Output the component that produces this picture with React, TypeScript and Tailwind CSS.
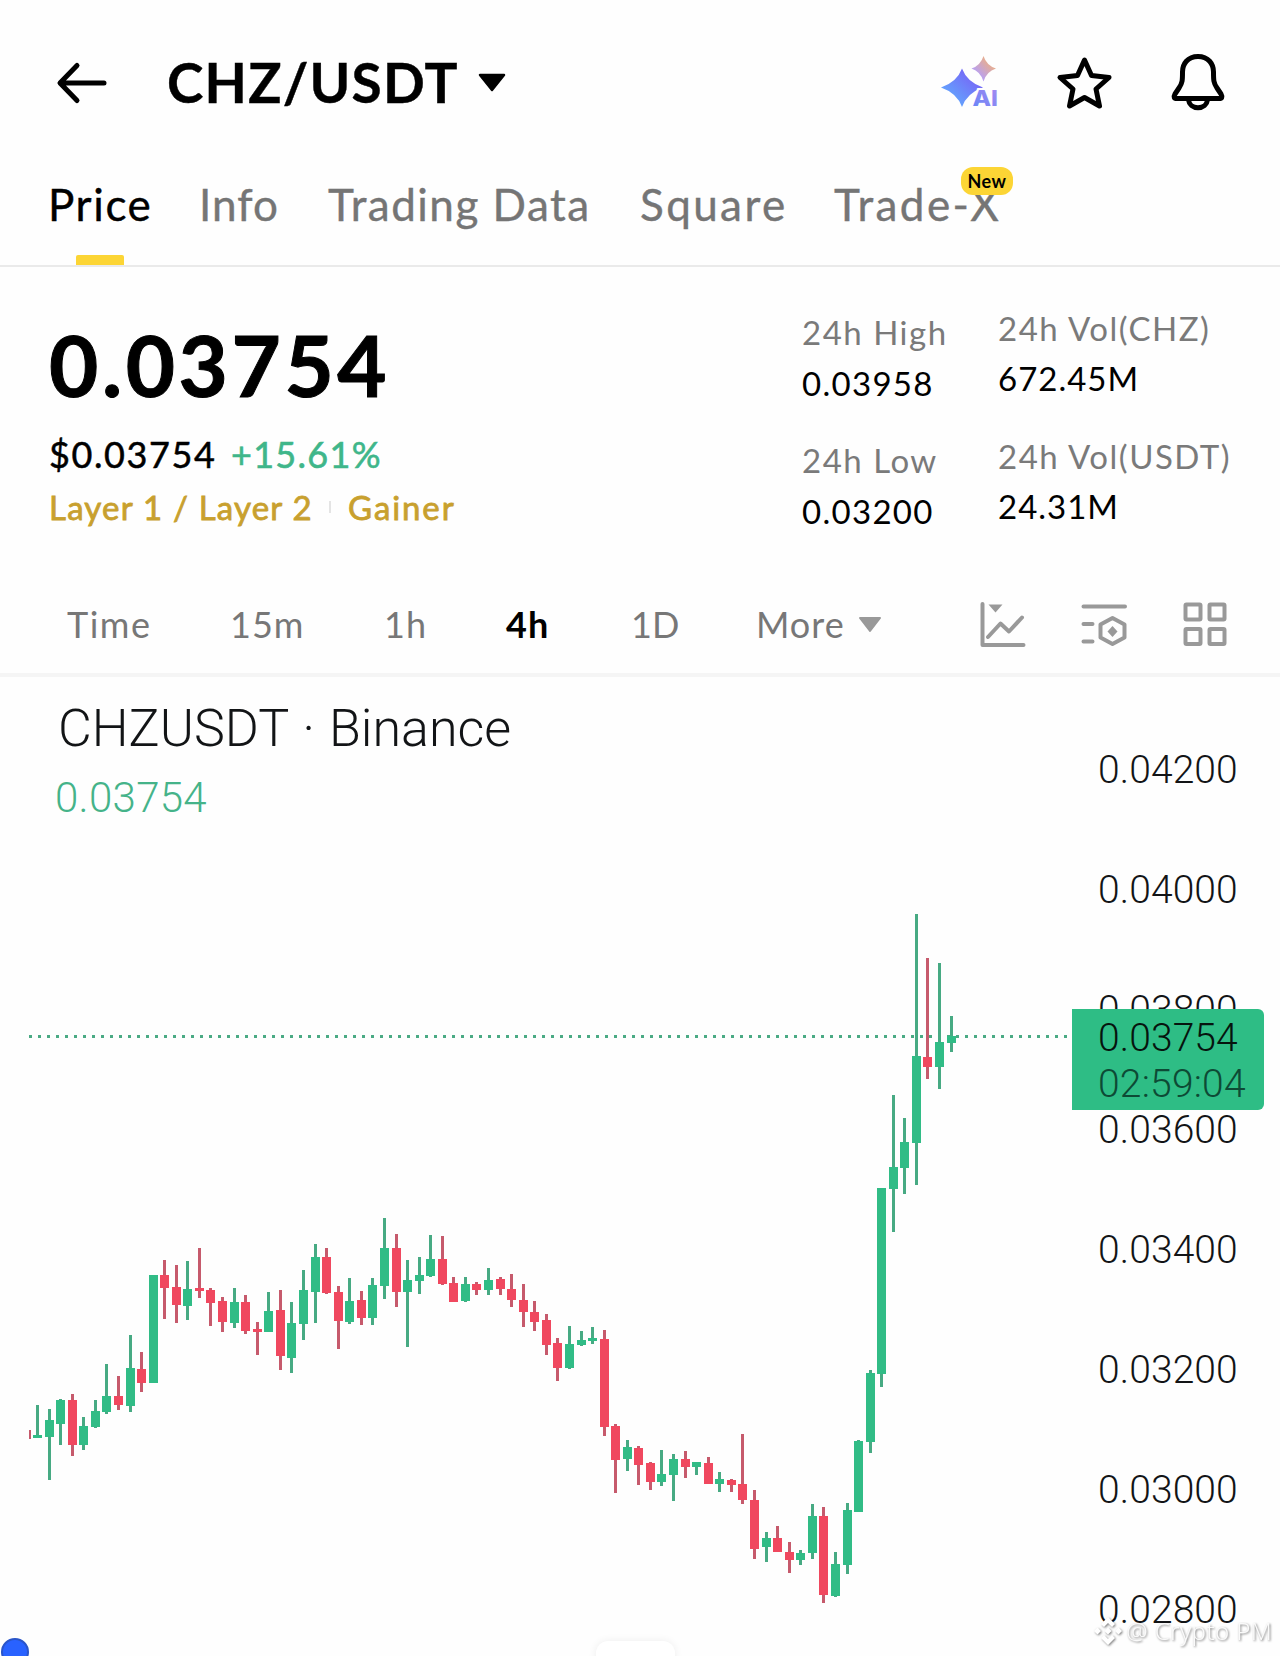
import React from "react";

type Direction = "up" | "down";

// [wick top, wick bottom, body top, body bottom, direction]
type Candle = [number, number, number, number, Direction];

const CANDLES: Candle[] = [
  [1405, 1438, 1435, 1438, "up"],
  [1409, 1480, 1420, 1437, "up"],
  [1399, 1445, 1400, 1424, "up"],
  [1394, 1456, 1400, 1445, "down"],
  [1417, 1450, 1426, 1445, "up"],
  [1400, 1428, 1411, 1427, "up"],
  [1364, 1414, 1396, 1412, "up"],
  [1376, 1410, 1396, 1405, "down"],
  [1335, 1412, 1368, 1406, "up"],
  [1352, 1392, 1369, 1383, "down"],
  [1275, 1383, 1275, 1383, "up"],
  [1260, 1319, 1275, 1288, "down"],
  [1265, 1323, 1287, 1305, "down"],
  [1261, 1320, 1289, 1306, "up"],
  [1248, 1298, 1288, 1291, "down"],
  [1288, 1326, 1290, 1303, "down"],
  [1297, 1332, 1301, 1322, "down"],
  [1288, 1328, 1302, 1323, "up"],
  [1295, 1334, 1302, 1331, "down"],
  [1322, 1355, 1329, 1332, "down"],
  [1292, 1332, 1311, 1332, "up"],
  [1290, 1370, 1310, 1356, "down"],
  [1302, 1373, 1323, 1358, "up"],
  [1270, 1340, 1290, 1324, "up"],
  [1244, 1323, 1257, 1292, "up"],
  [1248, 1294, 1257, 1293, "down"],
  [1286, 1349, 1292, 1321, "down"],
  [1278, 1324, 1301, 1322, "up"],
  [1291, 1325, 1300, 1318, "down"],
  [1278, 1325, 1285, 1318, "up"],
  [1218, 1299, 1248, 1286, "up"],
  [1234, 1307, 1248, 1292, "down"],
  [1260, 1347, 1280, 1292, "up"],
  [1257, 1294, 1275, 1281, "up"],
  [1235, 1277, 1259, 1276, "up"],
  [1236, 1285, 1259, 1284, "down"],
  [1277, 1302, 1283, 1302, "down"],
  [1277, 1302, 1284, 1301, "up"],
  [1282, 1295, 1284, 1290, "down"],
  [1268, 1295, 1280, 1290, "up"],
  [1277, 1295, 1279, 1289, "down"],
  [1274, 1307, 1289, 1300, "down"],
  [1284, 1327, 1300, 1312, "down"],
  [1301, 1331, 1312, 1322, "down"],
  [1314, 1355, 1320, 1345, "down"],
  [1338, 1381, 1343, 1368, "down"],
  [1326, 1369, 1344, 1368, "up"],
  [1331, 1346, 1340, 1345, "up"],
  [1327, 1344, 1338, 1341, "up"],
  [1330, 1436, 1339, 1427, "down"],
  [1424, 1493, 1426, 1460, "down"],
  [1440, 1471, 1447, 1459, "up"],
  [1446, 1485, 1448, 1465, "down"],
  [1462, 1490, 1463, 1482, "down"],
  [1450, 1486, 1474, 1482, "up"],
  [1454, 1501, 1459, 1475, "up"],
  [1451, 1478, 1459, 1467, "down"],
  [1462, 1475, 1462, 1467, "up"],
  [1457, 1484, 1463, 1484, "down"],
  [1472, 1492, 1479, 1484, "up"],
  [1479, 1492, 1480, 1485, "down"],
  [1434, 1504, 1484, 1500, "down"],
  [1490, 1559, 1500, 1549, "down"],
  [1532, 1562, 1538, 1547, "up"],
  [1526, 1552, 1538, 1552, "down"],
  [1542, 1573, 1552, 1560, "down"],
  [1550, 1565, 1553, 1560, "up"],
  [1504, 1559, 1516, 1553, "up"],
  [1507, 1603, 1516, 1595, "down"],
  [1552, 1597, 1564, 1596, "up"],
  [1503, 1574, 1510, 1565, "up"],
  [1440, 1512, 1441, 1512, "up"],
  [1370, 1453, 1373, 1442, "up"],
  [1188, 1387, 1188, 1374, "up"],
  [1095, 1232, 1167, 1189, "up"],
  [1118, 1194, 1142, 1168, "up"],
  [914, 1185, 1056, 1143, "up"],
  [958, 1079, 1057, 1067, "down"],
  [963, 1089, 1042, 1067, "up"],
  [1016, 1052, 1036, 1043, "up"],
];

const AXIS_PRICES = ["0.04200", "0.04000", "0.03800", "0.03600", "0.03400", "0.03200", "0.03000", "0.02800"];

const BODY_COLOR = { up: "#31bc86", down: "#f0485f" };
const WICK_COLOR = { up: "#47aa83", down: "#c65a6c" };

const candleX = (index: number) => Math.floor(37.485 + index * 11.565);

const Header: React.FC = () => (
  <header className="flex h-[166px] items-center">
    <svg className="ml-[54px] h-[50px] w-[56px] shrink-0" viewBox="54 58 56 50" fill="none" stroke="#000" strokeWidth="5" strokeLinecap="round" strokeLinejoin="round">
      <path d="M104 83H61M77 65.5L60 83l17 17.5" />
    </svg>
    <h1 className="ml-[57px] w-[310px] pb-[1px] text-[55px] font-bold tracking-[1.2px] whitespace-nowrap [-webkit-text-stroke:0.4px]">CHZ/USDT</h1>
    <svg className="h-[20px] w-[30px] shrink-0" viewBox="0 0 30 20">
      <path d="M3 2h24L15 17z" fill="#000" stroke="#000" strokeWidth="2.5" strokeLinejoin="round" />
    </svg>
    <svg className="ml-[431px] h-[60px] w-[64px] shrink-0" viewBox="938 53 64 60">
      <defs>
        <linearGradient id="spark" x1="0" y1="1" x2="1" y2="0">
          <stop offset="0.1" stopColor="#5fb0ff" />
          <stop offset="0.9" stopColor="#7a5cf5" />
        </linearGradient>
        <linearGradient id="sparkSmall" x1="0" y1="1" x2="1" y2="0">
          <stop offset="0.25" stopColor="#b7a0f5" />
          <stop offset="0.75" stopColor="#e8ae8e" />
        </linearGradient>
        <linearGradient id="ai" x1="0" y1="1" x2="1" y2="0">
          <stop offset="0" stopColor="#6285f8" />
          <stop offset="1" stopColor="#a98af0" />
        </linearGradient>
      </defs>
      <path d="M962 68.500Q967 82 983 87.500Q967 93 962 107Q957 93 941 87.500Q957 82 962 68.500Z" fill="url(#spark)" />
      <path d="M983.500 56Q986.500 65.500 996 68.500Q986.500 71.500 983.500 81.500Q980.500 71.500 971.500 68.500Q980.500 65.500 983.500 56Z" fill="url(#sparkSmall)" />
      <text x="972.500" y="106" textLength="25.500" lengthAdjust="spacingAndGlyphs" fill="url(#ai)" stroke="#fefefe" strokeWidth="4" paintOrder="stroke" className="font-['Inter',sans-serif] text-[21px] font-extrabold">
        AI
      </text>
    </svg>
    <svg className="ml-[52px] h-[60px] w-[60px] shrink-0" viewBox="1054 53 60 60" fill="none" stroke="#000" strokeWidth="5" strokeLinejoin="round">
      <path d="M1084.500 60L1091.500 75.500L1109 77.500L1096 89L1099.500 106L1084.500 97.500L1069.500 106L1073 89L1060 77.500L1077.500 75.500Z" />
    </svg>
    <svg className="ml-[54px] h-[60px] w-[60px] shrink-0" viewBox="1168 53 60 60" fill="none" stroke="#000" strokeWidth="5" strokeLinejoin="round">
      <path d="M1198 56.500C1187.500 56.500 1182.500 64 1182.500 72C1182.500 80 1182.500 83 1179 88L1175 94Q1172.500 98.500 1177 98.500H1219Q1223.500 98.500 1221 94L1217 88C1213.500 83 1213.500 80 1213.500 72C1213.500 64 1208.500 56.500 1198 56.500Z" />
      <path d="M1188.500 99C1189 110.500 1207 110.500 1207.500 99" />
    </svg>
  </header>
);

const Tabs: React.FC = () => (
  <nav className="flex h-[101px] border-b-2 border-[#eaeaea] pl-[48px] text-[44px] leading-[76px] whitespace-nowrap text-[#757575] [-webkit-text-stroke:0.4px]">
    <div className="flex w-[151px] flex-col text-black">
      <span className="tracking-[1.6px]">Price</span>
      <span className="mt-[13px] ml-[28px] h-[10px] w-[48px] rounded-t-xs bg-[#fcd535]" />
    </div>
    <span className="w-[129px] tracking-[1px]">Info</span>
    <span className="w-[312px] tracking-[1.5px]">Trading Data</span>
    <span className="w-[194px] tracking-[2.4px]">Square</span>
    <div className="relative">
      <span className="tracking-[2.4px]">Trade-X</span>
      <span className="absolute top-[1px] left-[127px] h-[28px] w-[52px] rounded-[12px] bg-[#fcd535] text-center text-[18px] leading-[28px] font-bold tracking-[0.5px] text-black [-webkit-text-stroke:0px]">
        New
      </span>
    </div>
  </nav>
);

const Stat: React.FC<{ label: string; value: string }> = ({ label, value }) => (
  <div className="whitespace-nowrap">
    <div className="tracking-[1.5px] text-[#7a7a7a]">{label}</div>
    <div>{value}</div>
  </div>
);

const PriceSummary: React.FC = () => (
  <section className="flex h-[310px] text-black">
    <div className="w-[802px] pt-[47px] pl-[49px]">
      <div className="text-[85px] leading-[100px] font-bold tracking-[3.6px] [-webkit-text-stroke:1px]">0.03754</div>
      <div className="mt-[15px] flex text-[36px] leading-[50px] tracking-[1.6px]">
        <span className="w-[182px] [-webkit-text-stroke:0.5px]">$0.03754</span>
        <span className="tracking-[1.3px] text-[#3fb68a] [-webkit-text-stroke:0.6px]">+15.61%</span>
      </div>
      <div className="mt-[3px] flex items-center text-[33px] leading-[50px] tracking-[1.2px] text-[#c8a02e] [-webkit-text-stroke:0.8px]">
        <span className="w-[280px]">Layer 1 / Layer 2</span>
        <span className="h-[12px] w-[2px] bg-[#e4e4e4]" />
        <span className="ml-[17px] tracking-[1.9px]">Gainer</span>
      </div>
    </div>
    <div className="flex w-[196px] flex-col gap-[26px] pt-[40px] text-[33px] leading-[51px] tracking-[1.3px]">
      <Stat label="24h High" value="0.03958" />
      <Stat label="24h Low" value="0.03200" />
    </div>
    <div className="flex flex-col gap-[28px] pt-[36px] text-[33px] leading-[50px] tracking-[1px]">
      <Stat label="24h Vol(CHZ)" value="672.45M" />
      <Stat label="24h Vol(USDT)" value="24.31M" />
    </div>
  </section>
);

const Timeframes: React.FC = () => (
  <section className="flex h-[100px] items-center border-b-4 border-[#f5f5f5] pl-[67px] text-[36px] tracking-[1px] whitespace-nowrap text-[#777]">
    <span className="w-[163px] pb-[2px] tracking-[1.5px]">Time</span>
    <span className="w-[154px] pb-[2px]">15m</span>
    <span className="w-[122px] pb-[2px]">1h</span>
    <span className="w-[125px] pb-[2px] font-bold text-black">4h</span>
    <span className="w-[125px] pb-[2px] tracking-normal">1D</span>
    <span className="w-[102px] pb-[2px]">More</span>
    <svg className="h-[16px] w-[24px] shrink-0" viewBox="0 1 24 16">
      <path d="M2 2h20L12 15z" fill="#999" stroke="#999" strokeWidth="2" strokeLinejoin="round" />
    </svg>
    <svg className="ml-[95px] h-[50px] w-[50px] shrink-0" viewBox="977 600 50 50" fill="none" stroke="#999" strokeWidth="4" strokeLinecap="round" strokeLinejoin="round">
      <path d="M982.500 604v41h41M988 637l12.500-13.500 8.500 8 13-14" />
      <path d="M988.500 604.500h14l-7 8z" fill="#999" stroke="none" />
    </svg>
    <svg className="ml-[52px] h-[50px] w-[50px] shrink-0" viewBox="1079 600 50 50" fill="none" stroke="#999" strokeWidth="4" strokeLinecap="round" strokeLinejoin="round">
      <path d="M1083.500 606.500h41.500M1083.500 624h9M1083.500 641.500h9M1112.500 618l12 6.500v13l-12 6.500-12-6.500v-13z" />
      <path d="M1112.500 626l5 5.500-5 5.500-5-5.500z" fill="#999" stroke="none" />
    </svg>
    <svg className="ml-[51px] h-[50px] w-[50px] shrink-0" viewBox="1180 600 50 50" fill="none" stroke="#999" strokeWidth="4">
      <rect x="1185.500" y="604.500" width="15" height="15" rx="1" />
      <rect x="1209.500" y="604.500" width="15" height="15" rx="1" />
      <rect x="1185.500" y="629" width="15" height="15" rx="1" />
      <rect x="1209.500" y="629" width="15" height="15" rx="1" />
    </svg>
  </section>
);

const CandleChart: React.FC = () => (
  <svg className="h-[979px] w-[1072px] shrink-0" viewBox="0 677 1072 979" shapeRendering="crispEdges">
    <path d="M29 1036.500H1068" stroke="#4aaa84" strokeWidth="3" strokeDasharray="3 6" />
    <rect x="29" y="1430" width="2" height="9" fill={WICK_COLOR.down} />
    {CANDLES.map(([high, low, top, bottom, direction], index) => {
      const x = candleX(index);
      return (
        <g key={index}>
          <rect x={x - 1} y={high} width="3" height={low - high} fill={WICK_COLOR[direction]} />
          <rect x={x - 4} y={top} width="9" height={bottom - top} fill={BODY_COLOR[direction]} />
        </g>
      );
    })}
  </svg>
);

const Watermark: React.FC = () => (
  <div className="absolute right-[8px] bottom-[10px] flex items-center gap-[4px] drop-shadow-[1px_1px_1px_rgba(0,0,0,0.5)]">
    <svg className="h-[30px] w-[28px]" viewBox="0 0 28 30" fill="#fff">
      <path d="M14 1l7 7-3 3-4-4-4 4-3-3zM14 29l7-7-3-3-4 4-4-4-3 3zM3.500 11.500L7 15l-3.500 3.500L0 15zM24.500 11.500L28 15l-3.500 3.500L21 15zM14 11.500l3.500 3.500-3.500 3.500-3.500-3.500z" />
    </svg>
    <span className="font-['Noto_Sans',sans-serif] text-[24px] leading-[30px] tracking-[0.4px] whitespace-nowrap text-[#fafafa]">@ Crypto PM</span>
  </div>
);

const App: React.FC = () => {
  return (
    <main className="h-[1656px] w-[1280px] overflow-hidden bg-[#fefefe] font-['Lato',sans-serif] text-black">
      <Header />
      <Tabs />
      <PriceSummary />
      <Timeframes />

      {/* Chart with its price axis */}
      <section className="relative flex h-[979px] overflow-hidden font-['Roboto',sans-serif] font-light text-[#121416]">
        <CandleChart />
        <div className="flex flex-col pt-[33px] pl-[26px] text-[39px] leading-[120px] tracking-[0.1px]">
          {AXIS_PRICES.map((price) => (
            <span key={price}>{price}</span>
          ))}
        </div>

        <div className="absolute top-[26px] left-[58px] whitespace-nowrap">
          <div className="text-[52px] leading-[52px] [word-spacing:1.3px]">CHZUSDT · Binance</div>
          <div className="mt-[22px] -ml-[3px] text-[42px] leading-[42px] tracking-[0.3px] text-[#45b389]">0.03754</div>
        </div>

        <div className="absolute top-[332px] left-[1072px] h-[101px] w-[192px] rounded-r-[6px] bg-[#2ebd85] pt-[6px] pl-[26px] text-[39px] leading-[46px] tracking-[0.1px]">
          <div className="text-[#06140e]">0.03754</div>
          <div className="tracking-[0.2px] text-[#0d4a35]">02:59:04</div>
        </div>

        <div className="absolute top-[961px] left-[1px] h-[28px] w-[28px] rounded-full border-2 border-[#2a55c9] bg-[#2962ff]" />
        <div className="absolute top-[964px] left-[596px] h-[40px] w-[79px] rounded-[12px] bg-white shadow-[0_0_8px_rgba(0,0,0,0.07)]" />
        <Watermark />
      </section>
    </main>
  );
};

export default App;
